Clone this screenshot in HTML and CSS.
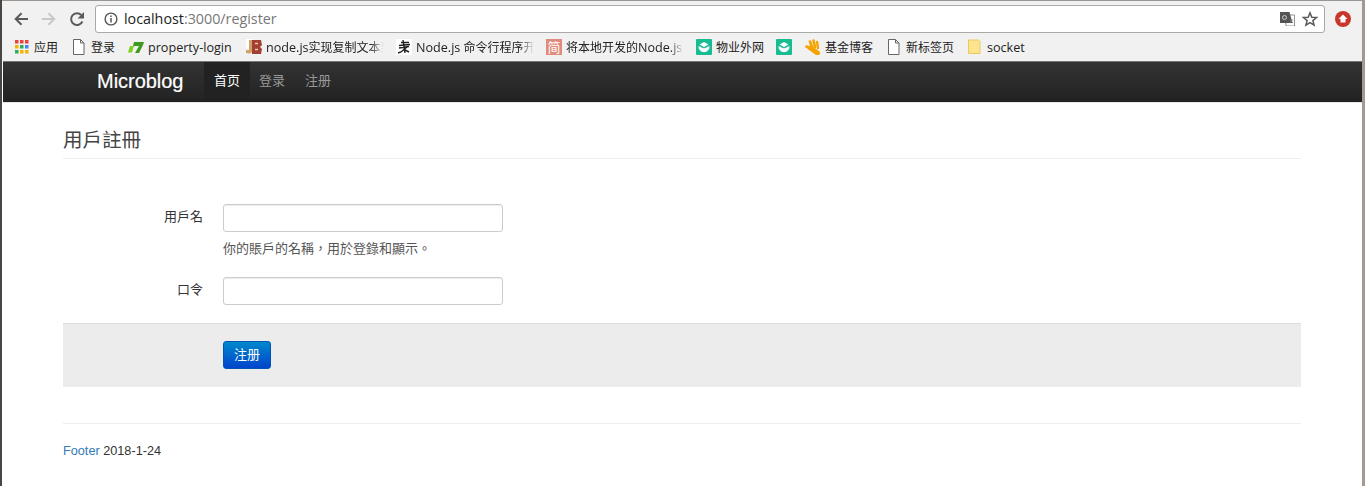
FILE: index.html
```html
<!DOCTYPE html>
<html lang="zh">
<head>
<meta charset="utf-8">
<title>Microblog</title>
<link rel="stylesheet" href="styles.css">
</head>
<body>
<div class="window">
  <header class="chrome">
    <div class="toolbar">
      <div class="nav-buttons">
        <svg class="tool" viewBox="0 0 16 16"><path d="M15 8H3M8.500 2.200 2.700 8l5.800 5.800" fill="none" stroke="#5a5a5a" stroke-width="2"/></svg>
        <svg class="tool" viewBox="0 0 16 16"><path d="M1 8h12M7.500 2.200 13.300 8l-5.800 5.800" fill="none" stroke="#c8c8c8" stroke-width="2"/></svg>
        <svg class="tool" viewBox="0 0 16 16"><path d="M13.400 10.500A5.900 5.900 0 1 1 12.300 4" fill="none" stroke="#5a5a5a" stroke-width="2"/><path d="M15 1v6.500H8.500z" fill="#5a5a5a"/></svg>
      </div>
      <div class="omnibox">
        <svg class="info" viewBox="0 0 14 14"><circle cx="7" cy="7" r="5.900" fill="none" stroke="#555" stroke-width="1.400"/><path d="M7 6v4.500M7 3.400v1.500" stroke="#555" stroke-width="1.500"/></svg>
        <span class="url"><span class="host">localhost</span>:3000/register</span>
        <svg class="translate" viewBox="0 0 15 14"><path d="M5 3h9.500v11H6z" fill="#fff" stroke="#777" stroke-width=".8"/><path d="M0 0h9.500l3 11H0z" fill="#555"/><circle cx="4.500" cy="5.500" r="2" fill="none" stroke="#ccc"/><path d="M9.800 7.500l3 3.500m0-3.500-3 3.500" stroke="#777"/></svg>
        <svg class="star" viewBox="0 0 16 16"><path d="M8 1.800 9.800 6.200l4.800.3-3.700 3.100 1.200 4.600L8 11.700l-4.100 2.500 1.200-4.600L1.400 6.500l4.800-.3z" fill="none" stroke="#5a5a5a" stroke-width="1.500"/></svg>
      </div>
      <svg class="ext" viewBox="0 0 16 16"><circle cx="8" cy="8" r="8" fill="#c9372c"/><path d="M8 3.500 12.500 8H10.500v3.500h-5V8H3.500z" fill="#fff"/></svg>
    </div>
    <nav class="bookmarks">
      <span class="bm bm-apps">
        <svg class="ico" viewBox="0 0 16 16"><rect x="1" y="1" width="3.500" height="3.500" fill="#e8453c"/><rect x="6" y="1" width="3.500" height="3.500" fill="#e8453c"/><rect x="11" y="1" width="3.500" height="3.500" fill="#e8453c"/><rect x="1" y="6" width="3.500" height="3.500" fill="#f4b400"/><rect x="6" y="6" width="3.500" height="3.500" fill="#34a853"/><rect x="11" y="6" width="3.500" height="3.500" fill="#4285f4"/><rect x="1" y="11" width="3.500" height="3.500" fill="#34a853"/><rect x="6" y="11" width="3.500" height="3.500" fill="#f4b400"/><rect x="11" y="11" width="3.500" height="3.500" fill="#f4b400"/></svg>
        <span class="label">应用</span>
      </span>
      <span class="bm bm-login">
        <svg class="ico" viewBox="0 0 16 16"><path d="M2.500.5h7l3.500 3.500v11.500H2.500z M9.500.5V4H13" fill="#fff" stroke="#666"/></svg>
        <span class="label">登录</span>
      </span>
      <span class="bm bm-prop">
        <svg class="ico" viewBox="0 0 16 16"><path d="M0 13.500 2 7h4l-2 6.500z" fill="#7ed321"/><path d="M6 3h10l-1 3-4 8H7l4-7H5z" fill="#3d9a1f"/></svg>
        <span class="label lat">property-login</span>
      </span>
      <span class="bm bm-copy fade">
        <svg class="ico" viewBox="0 0 16 16"><path d="M0 0h7v9H0z" fill="#fff"/><path d="M3 1h4v10c0 3-4 4-7 3v-3h3z" fill="#d3a267"/><path d="M6 1h9l1 5-2 2 2 2-1 5H6z" fill="#a33f33"/><path d="M9 4.500h3M9 10.500h3" stroke="#e8c8b8" stroke-width="1.600"/></svg>
        <span class="label"><span class="lat">node.js</span>实现复制文本到</span>
      </span>
      <span class="bm bm-cli fade">
        <svg class="ico" viewBox="0 0 16 16"><rect width="16" height="16" fill="#fff"/><path d="M5 3.500h8M3 6.500l11-1M3 9l10-1.500M7 1l2 13M11 8l-6 5-3 1M9 11l4 2" stroke="#222" stroke-width="1.400" fill="none"/></svg>
        <span class="label"><span class="lat">Node.js </span>命令行程序开发</span>
      </span>
      <span class="bm bm-jian fade">
        <span class="badge-jian">简</span>
        <span class="label">将本地开发的<span class="lat">Node.js</span></span>
      </span>
      <span class="bm bm-wuye">
        <svg class="ico" viewBox="0 0 16 16"><rect width="16" height="16" rx="1" fill="#18bc93"/><path d="M2.500 7 8 9.500 13.500 7c0 4-2.500 6-5.500 6S2.500 11 2.500 7z" fill="#fff"/><path d="M3.500 5.500 8 3l4.500 2.500L8 8z" fill="#fff"/></svg>
        <span class="label">物业外网</span>
      </span>
      <span class="bm bm-green">
        <svg class="ico" viewBox="0 0 16 16"><rect width="16" height="16" rx="1" fill="#18bc93"/><path d="M2.500 7 8 9.500 13.500 7c0 4-2.500 6-5.500 6S2.500 11 2.500 7z" fill="#fff"/><path d="M3.500 5.500 8 3l4.500 2.500L8 8z" fill="#fff"/></svg>
      </span>
      <span class="bm bm-fund">
        <svg class="ico" viewBox="0 0 16 16"><g fill="none" stroke="#f5a300" stroke-linecap="round"><path d="M5.500 9 12.500 14" stroke-width="5"/><path d="M1.500 7.500 5 9.500" stroke-width="2.600"/><path d="M5 2.500 7 8" stroke-width="2.600"/><path d="M8.500 1.500 10 8" stroke-width="2.600"/><path d="M12 3 13 9" stroke-width="2.400"/></g></svg>
        <span class="label">基金博客</span>
      </span>
      <span class="bm bm-new">
        <svg class="ico" viewBox="0 0 16 16"><path d="M2.500.5h7l3.500 3.500v11.500H2.500z M9.500.5V4H13" fill="#fff" stroke="#666"/></svg>
        <span class="label">新标签页</span>
      </span>
      <span class="bm bm-socket">
        <svg class="ico" viewBox="0 0 16 16"><path d="M1.500 1h10l1.500 1.500V14.500H1.500z" fill="#fde58f" stroke="#ecc95e"/></svg>
        <span class="label lat">socket</span>
      </span>
    </nav>
  </header>

  <div class="navbar">
    <a class="brand">Microblog</a>
    <ul class="nav">
      <li class="active">首页</li>
      <li>登录</li>
      <li>注册</li>
    </ul>
  </div>

  <main class="container" lang="zh-Hant">
    <h1 class="legend">用戶註冊</h1>
    <form class="form">
      <div class="field">
        <label class="field-label">用戶名</label>
        <div class="controls">
          <input class="input" type="text">
          <p class="help">你的賬戶的名稱，用於登錄和顯示。</p>
        </div>
      </div>
      <div class="field">
        <label class="field-label">口令</label>
        <div class="controls">
          <input class="input" type="password">
        </div>
      </div>
      <div class="actions">
        <button class="btn" type="button" lang="zh-Hans">注册</button>
      </div>
    </form>
    <footer class="footer"><a class="footer-link">Footer</a> 2018-1-24</footer>
  </main>
</div>
</body>
</html>
```

FILE: styles.css
```css
* { box-sizing: border-box; }
html, body { margin: 0; height: 100%; background: #fff; }
body {
  font-family: "Liberation Sans", "Noto Sans CJK SC", sans-serif;
  font-size: 13px;
  color: #333;
  overflow: hidden;
}
.window {
  height: 486px;
  border-left: 2px solid #4a4540;
  border-right: 3px solid #a09a92;
  display: flex;
  flex-direction: column;
}
.chrome {
  background: #f1f1f1;
  height: 61px;
  flex: none;
  border-top: 1px solid #9a9590;
}
.toolbar {
  height: 32px;
  display: flex;
  align-items: center;
  padding: 4px 0 0 11px;
}
.nav-buttons { display: flex; gap: 12px; }
.tool { width: 16px; height: 16px; display: block; }
.omnibox {
  width: 1230px;
  height: 28px;
  margin-left: 10px;
  background: #fff;
  border: 1px solid #a9a9a9;
  border-radius: 3px;
  display: flex;
  align-items: center;
  padding-left: 8px;
  flex: none;
}
.info { width: 14px; height: 14px; flex: none; }
.url {
  margin-left: 6px;
  margin-top: -1px;
  font-family: "Open Sans", "Liberation Sans", sans-serif;
  font-size: 14.3px;
  color: #777;
  flex: 1;
}
.host { color: #222; }
.translate { width: 15px; height: 14px; flex: none; }
.star { width: 16px; height: 16px; flex: none; margin: 0 6px 0 7px; }
.ext { width: 16px; height: 16px; margin-left: 10px; flex: none; }
.bookmarks {
  height: 28px;
  display: flex;
  align-items: center;
  padding-left: 12px;
  font-family: "Open Sans", "Noto Sans CJK SC", sans-serif;
  font-size: 12px;
  color: #222;
  white-space: nowrap;
}
.bm { display: flex; align-items: center; gap: 4px; flex: none; overflow: hidden; height: 24px; }
.ico { width: 16px; height: 16px; flex: none; }
.lat { font-size: 12.6px; }
.bm-apps { width: 57px; }
.bm-login { width: 57px; }
.bm-prop { width: 118px; }
.bm-copy { width: 150px; }
.bm-cli { width: 150px; }
.bm-jian { width: 150px; }
.bm-wuye { width: 80px; }
.bm-green { width: 29px; }
.bm-fund { width: 81px; }
.bm-new { width: 81px; }
.bm-socket { width: 60px; }
.fade .label {
  width: 118px;
  overflow: hidden;
  -webkit-mask-image: linear-gradient(90deg, #000 88%, transparent);
  mask-image: linear-gradient(90deg, #000 88%, transparent);
}
.badge-jian {
  width: 16px; height: 16px; flex: none;
  background: #e08b7c; color: #fff;
  font-size: 13px; line-height: 16px; text-align: center;
}
.navbar {
  height: 42px;
  flex: none;
  display: flex;
  margin-left: 1px;
  background: linear-gradient(#333, #222);
  border-top: 1px solid #777;
  border-bottom: 1px solid #e8e8e8;
}
.brand {
  margin-left: 94px;
  width: 107px;
  font-family: "Liberation Sans", sans-serif;
  font-size: 20px;
  line-height: 38px;
  letter-spacing: -.03px;
  color: #fff;
  -webkit-text-stroke: .2px #fff;
}
.nav { list-style: none; margin: 0; padding: 0; display: flex; }
.nav li { padding: 0 10px; line-height: 38px; color: #999; font-size: 13px; }
.nav .active { background: #222; color: #fff; margin-right: -1px; }
.container { margin: 0 61px; }
.legend {
  margin: 0;
  height: 56px;
  padding-top: 22px;
  font-family: "Noto Sans CJK TC", sans-serif;
  font-size: 19.5px;
  font-weight: 400;
  line-height: 28px;
  color: #444;
  border-bottom: 1px solid #eee;
}
.form { margin: 0; padding-top: 45px; font-family: "Liberation Sans", "Noto Sans CJK TC", sans-serif; }
.field { display: flex; }
.field-label { width: 140px; text-align: right; line-height: 26px; font-size: 13px; }
.controls { margin-left: 20px; }
.input {
  display: block;
  width: 280px;
  height: 28px;
  padding: 4px;
  background: #fff;
  border: 1px solid #ccc;
  border-radius: 3px;
  box-shadow: inset 0 1px 1px rgba(0,0,0,.075);
}
.help { margin: 5px 0 0; height: 40px; line-height: 24px; color: #555; font-size: 13px; }
.actions {
  margin-top: 18px;
  height: 64px;
  background: #ececec;
  border-top: 1px solid #ddd;
  padding: 17px 0 0 160px;
}
.btn {
  display: block;
  width: 48px;
  height: 28px;
  padding: 0 0 3px;
  font: 13px "Liberation Sans", "Noto Sans CJK SC", sans-serif;
  color: #fff;
  background: linear-gradient(#0088cc, #0044cc);
  border: 1px solid #0055b3;
  border-radius: 3px;
}
.footer {
  margin-top: 36px;
  border-top: 1px solid #eee;
  padding-top: 20px;
  line-height: 14px;
  font-size: 12.7px;
}
.footer-link { color: #337ab7; }
```
